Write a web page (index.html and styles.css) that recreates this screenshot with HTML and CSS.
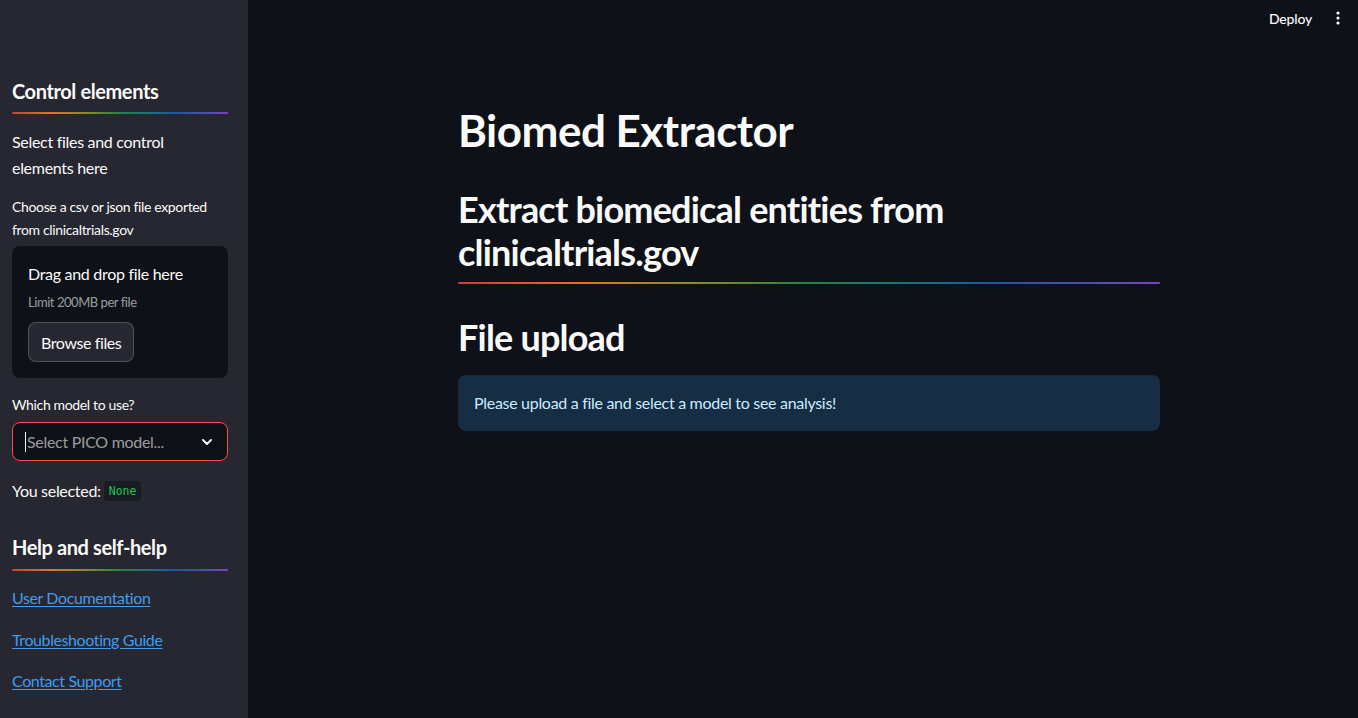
FILE: index.html
```html
<!DOCTYPE html>
<html lang="en">
<head>
<meta charset="utf-8">
<title>Biomed Extractor</title>
<link rel="stylesheet" href="styles.css">
</head>
<body>
<aside class="sidebar">
  <h3 class="side-title">Control elements</h3>
  <div class="rainbow"></div>
  <p class="side-text">Select files and control elements here</p>
  <label class="side-label first-label">Choose a csv or json file exported from clinicaltrials.gov</label>
  <div class="uploader">
    <div class="drop-title">Drag and drop file here</div>
    <div class="drop-limit">Limit 200MB per file</div>
    <button class="browse">Browse files</button>
  </div>
  <label class="side-label model-label">Which model to use?</label>
  <div class="select">
    <span class="caret"></span>
    <span class="placeholder">Select PICO model...</span>
    <svg class="chev" width="16" height="16" viewBox="0 0 16 16"><path d="M4 6l4 4 4-4" fill="none" stroke="#fafafa" stroke-width="2" stroke-linecap="round" stroke-linejoin="round"/></svg>
  </div>
  <p class="selected">You selected: <code class="code">None</code></p>
  <h3 class="side-title help-title">Help and self-help</h3>
  <div class="rainbow help-rule"></div>
  <nav class="links">
    <a href="#">User Documentation</a>
    <a href="#">Troubleshooting Guide</a>
    <a href="#">Contact Support</a>
  </nav>
</aside>
<main class="main">
  <header class="topbar">
    <span class="deploy">Deploy</span>
    <svg class="kebab" width="16" height="16" viewBox="0 0 16 16"><circle cx="8" cy="3" r="1.6" fill="#fafafa"/><circle cx="8" cy="8" r="1.6" fill="#fafafa"/><circle cx="8" cy="13" r="1.6" fill="#fafafa"/></svg>
  </header>
  <section class="content">
    <h1 class="title">Biomed Extractor</h1>
    <h2 class="subtitle">Extract biomedical entities from clinicaltrials.gov</h2>
    <div class="rainbow main-rule"></div>
    <h2 class="section">File upload</h2>
    <div class="info">Please upload a file and select a model to see analysis!</div>
  </section>
</main>
</body>
</html>
```
FILE: styles.css
```css
* { box-sizing: border-box; }
html, body { margin: 0; padding: 0; }
body {
  display: flex;
  width: 1358px;
  height: 718px;
  overflow: hidden;
  background: #0e1117;
  color: #fafafa;
  font-family: "Lato", "Liberation Sans", sans-serif;
  letter-spacing: -0.3px;
}
.sidebar {
  width: 248px;
  flex: 0 0 248px;
  height: 718px;
  background: #262730;
  padding: 79px 20px 0 12px;
  display: flex;
  flex-direction: column;
}
.side-title {
  margin: 0;
  font-size: 20px;
  line-height: 24px;
  font-weight: 700;
  letter-spacing: -0.4px;
}
.rainbow {
  height: 2px;
  border-radius: 1px;
  background: linear-gradient(to right, #c8403c 0%, #e07524 18%, #8c8a2a 34%, #24843e 50%, #17787a 62%, #1c58a6 76%, #4a4fb8 90%, #7a44c8 100%);
  margin-top: 9px;
}
.side-text {
  margin: 15px 0 0;
  font-size: 16px;
  line-height: 26px;
}
.side-label {
  display: block;
  font-size: 14px;
  line-height: 23px;
  letter-spacing: -0.35px;
}
.first-label { margin-top: 14px; }
.uploader {
  margin-top: 5px;
  background: #0e1117;
  border-radius: 8px;
  padding: 16px;
  display: flex;
  flex-direction: column;
  align-items: flex-start;
}
.drop-title { font-size: 16px; line-height: 24px; }
.drop-limit {
  margin-top: 6px;
  font-size: 13px;
  line-height: 20px;
  letter-spacing: -0.45px;
  color: rgba(250, 250, 250, 0.6);
}
.browse {
  margin-top: 10px;
  height: 40px;
  padding: 0 12px;
  background: #262730;
  border: 1px solid rgba(250, 250, 250, 0.2);
  border-radius: 8px;
  color: #fafafa;
  font-family: inherit;
  font-size: 16px;
  letter-spacing: -0.4px;
}
.model-label { margin-top: 17px; line-height: 20px; }
.select {
  margin-top: 7px;
  height: 39px;
  border: 1px solid #ff4b4b;
  border-radius: 8px;
  background: #0e1117;
  display: flex;
  align-items: center;
  padding: 0 12px 0 12px;
}
.caret {
  width: 1px;
  height: 20px;
  background: #fafafa;
}
.placeholder {
  flex: 1;
  font-size: 16px;
  color: rgba(250, 250, 250, 0.6);
  margin-left: 1px;
}
.chev { flex: 0 0 16px; margin-right: 0; }
.selected {
  margin: 18px 0 0;
  font-size: 16px;
  line-height: 24px;
  display: flex;
  align-items: center;
  gap: 3px;
}
.code {
  font-family: "DejaVu Sans Mono", "Liberation Mono", monospace;
  font-size: 11.5px;
  letter-spacing: 0;
  color: #21c354;
  background: #1a1c24;
  padding: 2px 5px;
  border-radius: 4px;
  line-height: 16px;
}
.help-title { margin-top: 32px; }
.help-rule { margin-top: 10px; }
.links {
  display: flex;
  flex-direction: column;
  gap: 17.5px;
  margin-top: 15px;
}
.links a {
  color: #3d9df3;
  font-size: 16px;
  line-height: 24px;
  letter-spacing: -0.4px;
  text-decoration: underline;
  text-underline-offset: 2px;
  align-self: flex-start;
}
.main {
  flex: 1;
  display: flex;
  flex-direction: column;
}
.topbar {
  height: 36px;
  display: flex;
  align-items: center;
  justify-content: flex-end;
  padding: 0 12px 0 0;
  gap: 18px;
}
.deploy { font-size: 14px; font-weight: 500; letter-spacing: -0.2px; }
.content {
  padding: 68px 0 0 210px;
  width: 912px;
}
.title {
  margin: 0;
  font-size: 44px;
  line-height: 53px;
  font-weight: 700;
  letter-spacing: -0.5px;
}
.subtitle {
  margin: 31px 0 0;
  font-size: 36px;
  line-height: 43px;
  font-weight: 700;
  letter-spacing: -0.8px;
}
.main-rule { margin-top: 8px; }
.section {
  margin: 32px 0 0;
  font-size: 36px;
  line-height: 43px;
  font-weight: 700;
  letter-spacing: -0.8px;
}
.info {
  margin-top: 16px;
  background: #172d43;
  color: #c7ebff;
  border-radius: 8px;
  padding: 16px;
  font-size: 16px;
  line-height: 24px;
}
```
